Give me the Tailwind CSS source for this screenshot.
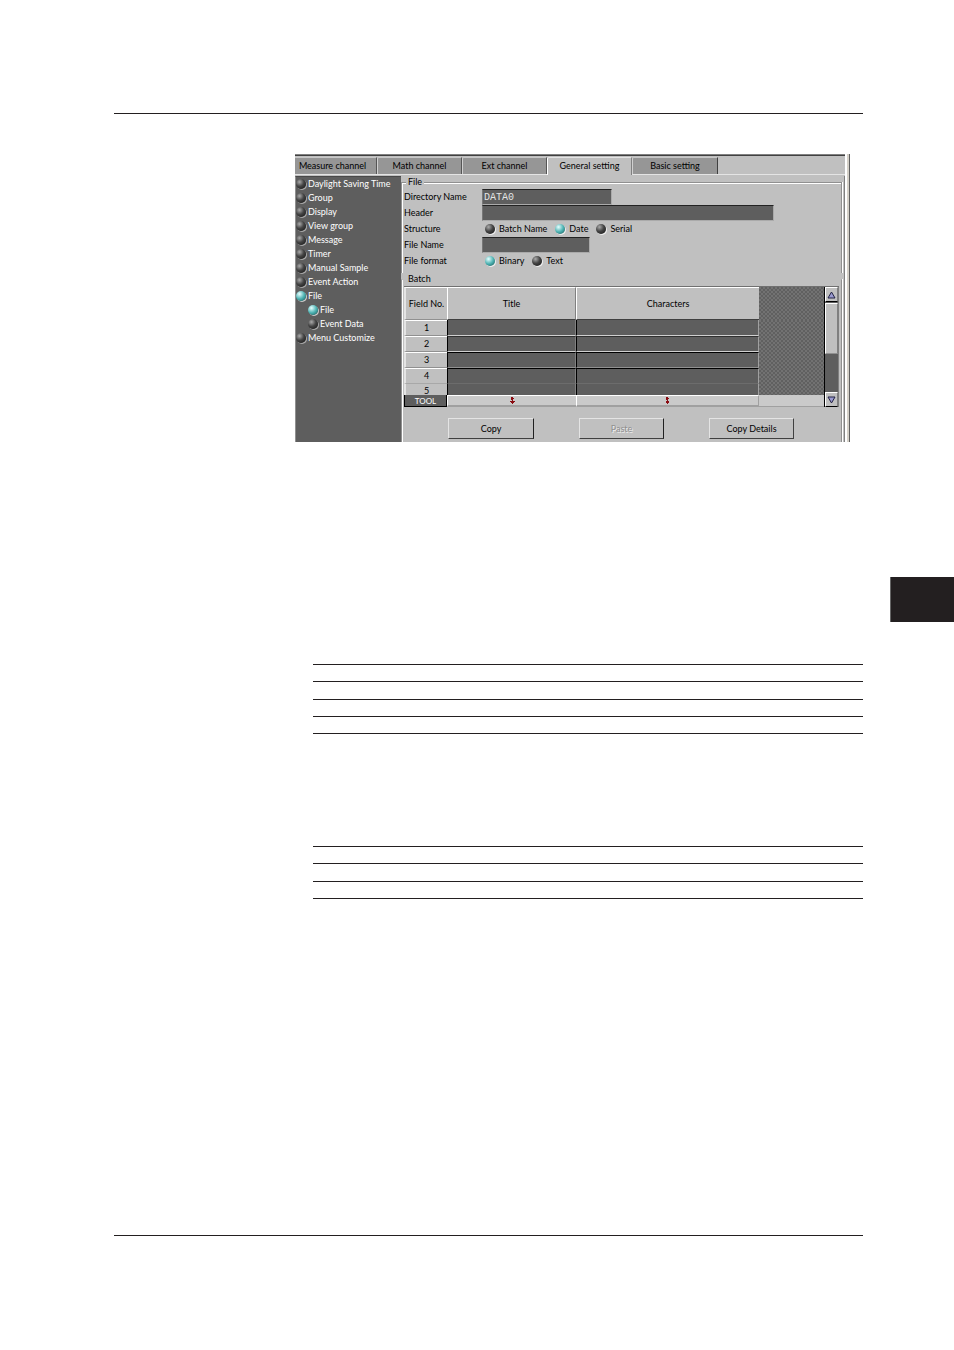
<!DOCTYPE html>
<html lang="en">
<head>
  <title>General setting</title>
  <meta charset="UTF-8">
  <script src="https://cdn.jsdelivr.net/npm/@tailwindcss/browser@4"></script>
</head>
<body class="bg-white font-[Lato,Arial,sans-serif] text-[9px] leading-[10px] text-black">
  <header class="ml-[114px] mr-[91px] h-[114px] border-b border-[#231f20]"></header>

  <main>
    <!-- settings window -->
    <section class="ml-[295px] mr-[104px] mt-10 flex h-[288px]">
      <div class="flex min-w-0 flex-1 flex-col border-t border-[#808080] bg-[#c0c0c0]">
        <!-- tabs -->
        <div role="tablist" class="flex h-5 border-b border-t border-b-[#e4e4e4] border-t-[#404040] pt-px">
          <button role="tab" class="w-[82px] border-r border-t border-r-[#555] border-t-[#c8c8c8] bg-[#969696] pr-[6px]">Measure channel</button>
          <button role="tab" class="w-[85px] rounded-tl-xs border-l border-r border-t border-l-[#d0d0d0] border-r-[#555] border-t-[#c8c8c8] bg-[#969696]">Math channel</button>
          <button role="tab" class="w-[85px] rounded-tl-xs border-l border-r border-t border-l-[#d0d0d0] border-r-[#555] border-t-[#c8c8c8] bg-[#969696]">Ext channel</button>
          <button role="tab" aria-selected="true" class="-mb-px w-[85px] rounded-tl-xs border-l border-r border-t border-l-white border-r-[#808080] border-t-[#e4e4e4] bg-[#c0c0c0] pb-px">General setting</button>
          <button role="tab" class="w-[86px] rounded-tl-xs border-l border-r border-t border-l-[#d0d0d0] border-r-[#404040] border-t-[#c8c8c8] bg-[#969696]">Basic setting</button>
        </div>

        <div class="flex flex-1 pt-px">
          <!-- menu -->
          <nav class="flex w-[106px] flex-col border-l border-t border-l-[#909090] border-t-[#484848] bg-[#5e5e5e] text-white">
            <button class="flex h-[14px] items-center gap-[2px]"><span class="size-[10px] rounded-full bg-[radial-gradient(circle_at_35%_30%,#aaa,#444_45%,#111)] shadow-[1px_1px_0_#aaa]"></span>Daylight Saving Time</button>
            <button class="flex h-[14px] items-center gap-[2px]"><span class="size-[10px] rounded-full bg-[radial-gradient(circle_at_35%_30%,#aaa,#444_45%,#111)] shadow-[1px_1px_0_#aaa]"></span>Group</button>
            <button class="flex h-[14px] items-center gap-[2px]"><span class="size-[10px] rounded-full bg-[radial-gradient(circle_at_35%_30%,#aaa,#444_45%,#111)] shadow-[1px_1px_0_#aaa]"></span>Display</button>
            <button class="flex h-[14px] items-center gap-[2px]"><span class="size-[10px] rounded-full bg-[radial-gradient(circle_at_35%_30%,#aaa,#444_45%,#111)] shadow-[1px_1px_0_#aaa]"></span>View group</button>
            <button class="flex h-[14px] items-center gap-[2px]"><span class="size-[10px] rounded-full bg-[radial-gradient(circle_at_35%_30%,#aaa,#444_45%,#111)] shadow-[1px_1px_0_#aaa]"></span>Message</button>
            <button class="flex h-[14px] items-center gap-[2px]"><span class="size-[10px] rounded-full bg-[radial-gradient(circle_at_35%_30%,#aaa,#444_45%,#111)] shadow-[1px_1px_0_#aaa]"></span>Timer</button>
            <button class="flex h-[14px] items-center gap-[2px]"><span class="size-[10px] rounded-full bg-[radial-gradient(circle_at_35%_30%,#aaa,#444_45%,#111)] shadow-[1px_1px_0_#aaa]"></span>Manual Sample</button>
            <button class="flex h-[14px] items-center gap-[2px]"><span class="size-[10px] rounded-full bg-[radial-gradient(circle_at_35%_30%,#aaa,#444_45%,#111)] shadow-[1px_1px_0_#aaa]"></span>Event Action</button>
            <button class="flex h-[14px] items-center gap-[2px]"><span class="size-[10px] rounded-full bg-[radial-gradient(circle_at_35%_30%,#e8ffff,#4fb3b3_50%,#155)] shadow-[1px_1px_0_#ccc]"></span>File</button>
            <button class="flex h-[14px] items-center gap-[2px] pl-3"><span class="size-[10px] rounded-full bg-[radial-gradient(circle_at_35%_30%,#e8ffff,#4fb3b3_50%,#155)] shadow-[1px_1px_0_#ccc]"></span>File</button>
            <button class="flex h-[14px] items-center gap-[2px] pl-3"><span class="size-[10px] rounded-full bg-[radial-gradient(circle_at_35%_30%,#aaa,#444_45%,#111)] shadow-[1px_1px_0_#aaa]"></span>Event Data</button>
            <button class="flex h-[14px] items-center gap-[2px]"><span class="size-[10px] rounded-full bg-[radial-gradient(circle_at_35%_30%,#aaa,#444_45%,#111)] shadow-[1px_1px_0_#aaa]"></span>Menu Customize</button>
          </nav>

          <form class="min-w-0 flex-1 border-r border-[#808080] pr-[2px] pt-px">
            <!-- file -->
            <fieldset class="h-24 border-l border-r border-t border-[#909090] shadow-[inset_1px_1px_0_#fff,1px_0_0_#fff]">
              <legend class="ml-1 bg-[#c0c0c0] px-[2px]">File</legend>
              <div class="grid auto-rows-[16px] grid-cols-[78px_1fr] items-center pl-[2px] pt-[2px]">
                <label for="dir">Directory Name</label>
                <input id="dir" value="DATA0" class="h-4 w-[130px] border border-b-[#aaa] border-l-[#777] border-r-[#aaa] border-t-[#222] bg-[#5e5e5e] px-px font-['Liberation_Mono',monospace] text-[10px] text-[#e4e4e4]">
                <label for="header">Header</label>
                <input id="header" class="h-4 w-[292px] border border-b-[#aaa] border-l-[#777] border-r-[#aaa] border-t-[#222] bg-[#5e5e5e] px-px text-white">
                <span>Structure</span>
                <div class="flex gap-2 pl-[3px]">
                  <label class="flex items-center gap-1"><input type="radio" name="structure" class="size-[10px] appearance-none rounded-full bg-[radial-gradient(circle_at_35%_30%,#aaa,#444_45%,#111)] shadow-[1px_1px_0_#eee] checked:bg-[radial-gradient(circle_at_35%_30%,#e8ffff,#4fb3b3_50%,#155)]">Batch Name</label>
                  <label class="flex items-center gap-1"><input type="radio" name="structure" checked class="size-[10px] appearance-none rounded-full bg-[radial-gradient(circle_at_35%_30%,#aaa,#444_45%,#111)] shadow-[1px_1px_0_#eee] checked:bg-[radial-gradient(circle_at_35%_30%,#e8ffff,#4fb3b3_50%,#155)]">Date</label>
                  <label class="flex items-center gap-1"><input type="radio" name="structure" class="size-[10px] appearance-none rounded-full bg-[radial-gradient(circle_at_35%_30%,#aaa,#444_45%,#111)] shadow-[1px_1px_0_#eee] checked:bg-[radial-gradient(circle_at_35%_30%,#e8ffff,#4fb3b3_50%,#155)]">Serial</label>
                </div>
                <label for="filename">File Name</label>
                <input id="filename" class="h-4 w-[108px] border border-b-[#aaa] border-l-[#777] border-r-[#aaa] border-t-[#222] bg-[#5e5e5e] px-px text-white">
                <span>File format</span>
                <div class="flex gap-2 pl-[3px]">
                  <label class="flex items-center gap-1"><input type="radio" name="format" checked class="size-[10px] appearance-none rounded-full bg-[radial-gradient(circle_at_35%_30%,#aaa,#444_45%,#111)] shadow-[1px_1px_0_#eee] checked:bg-[radial-gradient(circle_at_35%_30%,#e8ffff,#4fb3b3_50%,#155)]">Binary</label>
                  <label class="flex items-center gap-1"><input type="radio" name="format" class="size-[10px] appearance-none rounded-full bg-[radial-gradient(circle_at_35%_30%,#aaa,#444_45%,#111)] shadow-[1px_1px_0_#eee] checked:bg-[radial-gradient(circle_at_35%_30%,#e8ffff,#4fb3b3_50%,#155)]">Text</label>
                </div>
              </div>
            </fieldset>

            <!-- batch -->
            <fieldset class="mt-px h-[168px] border-l border-r border-t border-[#909090] border-t-[#c0c0c0] shadow-[inset_1px_0_0_#fff,1px_0_0_#fff]">
              <legend class="ml-1 bg-[#c0c0c0] px-[2px]">Batch</legend>
              <div class="mx-[2px] mt-[2px] flex h-[121px] border-t border-[#707070]">
                <table class="min-w-0 flex-1 table-fixed border-separate border-spacing-0 text-center">
                  <colgroup>
                    <col class="w-[43px]">
                    <col class="w-[129px]">
                    <col class="w-[183px]">
                    <col>
                  </colgroup>
                  <thead>
                    <tr class="h-[33px]">
                      <th class="border-b border-l-2 border-t border-b-[#909090] border-l-[#e4e4e4] border-t-white font-normal">Field No.</th>
                      <th class="border-b border-l border-r border-t border-b-[#404040] border-l-white border-r-[#808080] border-t-white font-normal">Title</th>
                      <th class="border-b border-l border-t border-b-[#404040] border-l-white border-t-white font-normal">Characters</th>
                      <td class="bg-[repeating-conic-gradient(#606060_0_25%,#727272_0_50%)] bg-[length:4px_4px]"></td>
                    </tr>
                  </thead>
                  <tbody>
                    <tr class="h-4">
                      <th class="border-b border-l-2 border-t border-b-[#909090] border-l-[#e4e4e4] border-t-white font-normal">1</th>
                      <td class="border-b border-l border-r border-b-[#d0d0d0] border-l-black border-r-[#808080] bg-[#5e5e5e]"></td>
                      <td class="border-b border-l border-r border-b-[#d0d0d0] border-l-black border-r-[#a0a0a0] bg-[#5e5e5e]"></td>
                      <td rowspan="5" class="bg-[repeating-conic-gradient(#606060_0_25%,#727272_0_50%)] bg-[length:4px_4px]"></td>
                    </tr>
                    <tr class="h-4">
                      <th class="border-b border-l-2 border-t border-b-[#909090] border-l-[#e4e4e4] border-t-white font-normal">2</th>
                      <td class="border-b border-l border-r border-t border-b-[#d0d0d0] border-l-black border-r-[#808080] border-t-[#303030] bg-[#5e5e5e]"></td>
                      <td class="border-b border-l border-r border-t border-b-[#d0d0d0] border-l-black border-r-[#a0a0a0] border-t-[#303030] bg-[#5e5e5e]"></td>
                    </tr>
                    <tr class="h-4">
                      <th class="border-b border-l-2 border-t border-b-[#909090] border-l-[#e4e4e4] border-t-white font-normal">3</th>
                      <td class="border-b border-l border-r border-t border-b-[#909090] border-l-black border-r-[#808080] border-t-black bg-[#5e5e5e]"></td>
                      <td class="border-b border-l border-r border-t border-b-[#909090] border-l-black border-r-[#a0a0a0] border-t-black bg-[#5e5e5e]"></td>
                    </tr>
                    <tr class="h-4">
                      <th class="border-b border-l-2 border-t border-b-[#a8a8a8] border-l-[#e4e4e4] border-t-white font-normal">4</th>
                      <td class="border-b border-l border-r border-t border-b-[#6c6c6c] border-l-black border-r-[#808080] border-t-black bg-[#5e5e5e]"></td>
                      <td class="border-b border-l border-r border-t border-b-[#6c6c6c] border-l-black border-r-[#a0a0a0] border-t-black bg-[#5e5e5e]"></td>
                    </tr>
                    <tr class="h-[11px]">
                      <th class="border-l-2 border-l-[#e4e4e4] align-bottom font-normal"><div class="h-[9px] overflow-hidden">5</div></th>
                      <td class="border-l border-r border-l-black border-r-[#808080] bg-[#5e5e5e]"></td>
                      <td class="border-l border-r border-l-black border-r-[#a0a0a0] bg-[#5e5e5e]"></td>
                    </tr>
                  </tbody>
                  <tfoot>
                    <tr class="h-3">
                      <th class="border-b border-l border-r border-black bg-[#5e5e5e] text-[8px] font-normal leading-[8px] text-white">TOOL</th>
                      <td class="border-b-2 border-l border-t border-b-[#a0a0a0] border-l-white border-t-white bg-[#cacaca]">
                        <svg class="mx-auto h-[7px] w-[5px]" viewBox="0 0 5 7" fill="#8b0c12"><path d="M1 0h2v1h1v1H3v2h2v1H4v1H3v1H2V6H1V5H0V4h2V3H1z"/></svg>
                      </td>
                      <td class="border-b-2 border-l border-r border-t border-b-[#a0a0a0] border-l-white border-r-[#a0a0a0] border-t-white bg-[#cacaca]">
                        <svg class="mx-auto h-[7px] w-[5px]" viewBox="0 0 5 7" fill="#8b0c12"><path d="M1 0h2v1h1v1H3v2h1v2H3v1H2V6H1V4h1V3H1z"/></svg>
                      </td>
                      <td class="border-b border-[#a0a0a0] bg-[#cacaca]"></td>
                    </tr>
                  </tfoot>
                </table>
                <!-- scrollbar -->
                <div class="flex w-[15px] flex-col border-l border-r border-l-black border-r-[#808080] bg-[#5e5e5e]">
                  <button type="button" aria-label="Scroll up" class="flex h-[15px] items-center justify-center border border-b-black border-l-white border-r-[#808080] border-t-white bg-[#c0c0c0]">
                    <svg class="h-[8px] w-[9px]" viewBox="0 0 9 8" fill="#9a9ad0" stroke="#222244"><path d="M4.500 1L8 7H1z"/></svg>
                  </button>
                  <div class="mt-px h-[51px] border border-b-[#909090] border-l-white border-r-[#808080] border-t-white bg-[#c0c0c0]"></div>
                  <button type="button" aria-label="Scroll down" class="mt-auto flex h-[15px] items-center justify-center border border-b-black border-l-white border-r-[#808080] border-t-white bg-[#c0c0c0]">
                    <svg class="h-[8px] w-[9px]" viewBox="0 0 9 8" fill="#9a9ad0" stroke="#222244"><path d="M4.500 7L8 1H1z"/></svg>
                  </button>
                </div>
              </div>
              <div class="flex gap-[45px] pl-[46px] pt-[11px]">
                <button type="button" class="h-[21px] w-[86px] border border-b-[#404040] border-l-[#e4e4e4] border-r-[#202020] border-t-[#e4e4e4]">Copy</button>
                <button type="button" disabled class="h-[21px] w-[85px] border border-b-[#404040] border-l-[#e4e4e4] border-r-[#202020] border-t-[#e4e4e4] text-[#909090] text-shadow-[1px_1px_0_#eee]">Paste</button>
                <button type="button" class="h-[21px] w-[85px] border border-b-[#404040] border-l-[#e4e4e4] border-r-[#404040] border-t-[#e4e4e4]">Copy Details</button>
              </div>
            </fieldset>
          </form>
        </div>
      </div>
      <div class="ml-[2px] w-[3px] border-r border-[#606060] bg-[#d4d0c8]"></div>
    </section>

    <!-- chapter marker -->
    <div class="mt-[135px] flex justify-end">
      <div class="h-[45px] w-16 border-l border-[#666] bg-[#231f20]"></div>
    </div>

    <!-- ruled lines -->
    <div class="ml-[313px] mr-[91px] mt-[42px] flex h-[70px] flex-col justify-between">
      <hr class="border-[#231f20]">
      <hr class="border-[#231f20]">
      <hr class="border-[#231f20]">
      <hr class="border-[#231f20]">
      <hr class="border-[#231f20]">
    </div>
    <div class="ml-[313px] mr-[91px] mt-28 flex h-[53px] flex-col justify-between">
      <hr class="border-[#231f20]">
      <hr class="border-[#231f20]">
      <hr class="border-[#231f20]">
      <hr class="border-[#231f20]">
    </div>
  </main>

  <footer class="ml-[114px] mr-[91px] mt-[336px] border-t border-[#231f20]"></footer>
</body>
</html>
